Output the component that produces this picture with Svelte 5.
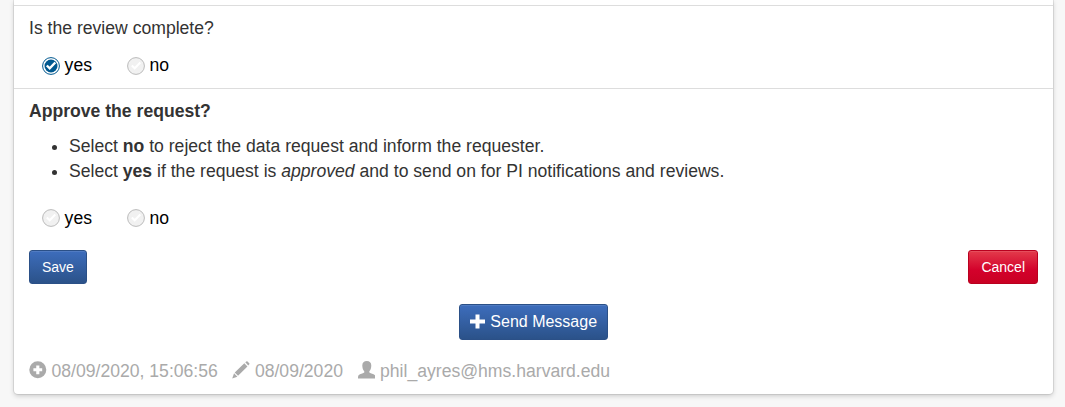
<script>
  const questions = [
    { id: 'complete', value: 'yes' },
    { id: 'approve', value: null }
  ];
  const options = ['yes', 'no'];
</script>

{#snippet choices(question)}
  <div class="choices" role="radiogroup">
    {#each options as option}
      <span class="choice" role="radio" tabindex="0" aria-checked={question.value === option}>
        <svg class="dot" viewBox="0 0 18 18">
          {#if question.value === option}
            <circle cx="9" cy="9" r="8.4" fill="#fff" stroke="#00588f" stroke-width="1" />
            <circle cx="9" cy="9" r="6.5" fill="#00588f" />
            <path d="M4.8 8.5l2.9 2.8 5.6-5.8" fill="none" stroke="#fff" stroke-width="2.4" />
          {:else}
            <circle cx="9" cy="9" r="8.4" fill="#f1f1f1" stroke="#bbb" stroke-width="1" />
            <path d="M4.8 8.5l2.9 2.8 5.6-5.8" fill="none" stroke="#fff" stroke-width="2" />
          {/if}
        </svg>
        <span>{option}</span>
      </span>
    {/each}
  </div>
{/snippet}

<main>
  <div class="card">
    <section class="first">
      <p>Is the review complete?</p>
      {@render choices(questions[0])}
    </section>
    <section class="second">
      <p><strong>Approve the request?</strong></p>
      <ul>
        <li>Select <strong>no</strong> to reject the data request and inform the requester.</li>
        <li>Select <strong>yes</strong> if the request is <em>approved</em> and to send on for PI notifications and reviews.</li>
      </ul>
      {@render choices(questions[1])}
    </section>
    <div class="actions">
      <button class="save">Save</button>
      <button class="cancel">Cancel</button>
    </div>
    <div class="message">
      <button class="send">
        <svg viewBox="0 0 16 16"><path d="M5.500 .5h4v5h5.500v4H9.500v5h-4v-5H0v-4h5.500z" fill="#fff" /></svg>
        <span>Send Message</span>
      </button>
    </div>
    <footer>
      <span class="meta created">
        <svg viewBox="0 0 18 18"><path fill-rule="evenodd" d="M9 .2a8.7 8.7 0 1 1 0 17.4a8.7 8.7 0 0 1 0-17.4zM7.4 4.5v3H4.5v3h2.9v3h3.2v-3h2.9v-3h-2.9v-3z" /></svg>
        <span>08/09/2020, 15:06:56</span>
      </span>
      <span class="meta edited">
        <svg viewBox="0 0 18 18"><path d="M13.6 1.4l1.1-1q.6-.5 1.2.1l1.7 1.700q.6.6.1 1.200l-1.100 1.100zM12.600 2.400l3.200 3.200-9.600 9.600-3.400-3.400zM2.100 12.600l3.400 3.400-5.300 1.900z" /></svg>
        <span>08/09/2020</span>
      </span>
      <span class="meta user">
        <svg viewBox="0 0 18 18"><path d="M9 0c2.9 0 4.6 1.8 4.6 4.5 0 2.6-.8 4.7-2 5.9v1.400c1.800 1 4.200 1.500 5.500 2.500.8.6.9 1.600.9 3.700H0c0-2.100.1-3.100.9-3.700 1.300-1 3.700-1.500 5.500-2.500v-1.400c-1.200-1.200-2-3.300-2-5.900C4.400 1.800 6.100 0 9 0z" /></svg>
        <span>phil_ayres@hms.harvard.edu</span>
      </span>
    </footer>
  </div>
</main>

<style>
  :global(body) {
    margin: 0;
    background: #f7f7f7;
  }
  main {
    box-sizing: border-box;
    height: 407px;
    padding: 0 12px 13px 14px;
    overflow: hidden;
    font: 17.6px/25px "Liberation Sans", Arial, sans-serif;
    color: #333;
  }
  .card {
    box-sizing: border-box;
    height: 394px;
    padding-top: 5px;
    background: #fff;
    border-radius: 0 0 4px 4px;
    box-shadow: 0 0 0 1px rgba(0, 0, 0, 0.08), 0 2px 5px rgba(0, 0, 0, 0.18);
  }
  section {
    box-sizing: border-box;
    padding: 10px 15px 0;
    border-top: 1px solid #ddd;
  }
  .first { height: 83px; }
  .second { height: 162px; }
  p { margin: 0; }
  ul {
    margin: 10px 0 22px;
    padding-left: 40px;
  }
  .choices {
    display: flex;
    margin: 12px 0 0 13px;
    color: #000;
  }
  .choice {
    display: flex;
    width: 84.8px;
    gap: 4.6px;
  }
  .dot {
    width: 18px;
    height: 18px;
    margin-top: 4px;
  }
  .second .dot {
    margin-top: 3px;
  }
  .actions {
    display: flex;
    justify-content: space-between;
    padding: 0 15px;
  }
  button {
    box-sizing: border-box;
    height: 34px;
    padding: 0 12px;
    border: 1px solid #2b5087;
    border-radius: 3px;
    background: linear-gradient(#3d6dbc, #2b5289);
    box-shadow: inset 0 1px 0 rgba(255, 255, 255, 0.1);
    color: #fff;
    font: 14px/20px "Liberation Sans", Arial, sans-serif;
  }
  .cancel {
    border-color: #b9001f;
    background: linear-gradient(#e33b4b, #d3012b 60%, #c90023);
  }
  .message {
    display: flex;
    justify-content: center;
    margin-top: 20px;
  }
  .send {
    display: flex;
    align-items: center;
    gap: 4.4px;
    height: 36px;
    padding: 0 10px;
    font-size: 16px;
  }
  .send svg {
    width: 16px;
    height: 16px;
  }
  footer {
    display: flex;
    gap: 14.6px;
    padding: 19px 15px 0;
    color: #aaa;
  }
  .meta {
    display: flex;
    gap: 4.9px;
  }
  .meta svg {
    width: 17.6px;
    height: 17.6px;
    margin-top: 2px;
    fill: #aaa;
  }
</style>
